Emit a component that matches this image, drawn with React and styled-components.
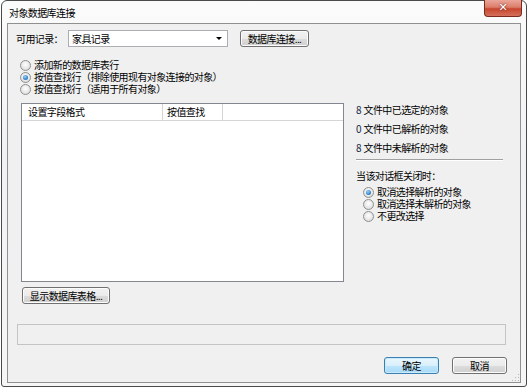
import React from "react";
import styled, { createGlobalStyle, css } from "styled-components";

const GlobalStyle = createGlobalStyle`
  body {
    margin: 0;
    background: #ffffff;
    font-family: "Noto Sans CJK SC", "Noto Sans", sans-serif;
    font-size: 10px;
    line-height: 12px;
    color: #000;
  }
`;

const Window = styled.div`
  width: 514px;
  height: 382px;
  margin-left: 1px;
  border: 1px solid #4a4a4a;
  border-radius: 6px 6px 3px 3px;
  background: linear-gradient(180deg, #fbfbfb 0%, #f1f2f4 40%, #f6f6f6 100%);
  display: flex;
  flex-direction: column;
  padding: 0 5px 3px 5px;
  box-sizing: content-box;
`;

const TitleBar = styled.div`
  height: 22px;
  flex-shrink: 0;
  display: flex;
  align-items: flex-start;
  justify-content: space-between;
`;

const TitleText = styled.div`
  margin-top: 6px;
  padding-left: 2px;
  letter-spacing: -0.6px;
`;

const CloseButton = styled.div`
  width: 36px;
  height: 16px;
  margin-top: -1px;
  margin-right: -1px;
  border: 1px solid #7a2a1e;
  border-top: none;
  border-radius: 0 0 4px 4px;
  background: linear-gradient(180deg, #eaa79a 0%, #dc7d6a 45%, #c8462f 55%, #d4705b 100%);
  display: flex;
  align-items: center;
  justify-content: center;
  color: #fff;
  font-family: "DejaVu Sans", sans-serif;
  font-weight: bold;
  font-size: 11px;
  text-shadow: 0 0 2px #5a1a10;
`;

const Client = styled.div`
  flex: 1;
  border: 1px solid #8f9090;
  background: #f0f0f0;
  display: flex;
  flex-direction: column;
  position: relative;
`;

const TopRow = styled.div`
  display: flex;
  align-items: center;
  margin: 6px 0 0 8px;
  height: 17px;
`;

const Label = styled.div`
  width: 52px;
  letter-spacing: -0.6px;
`;

const Select = styled.div`
  width: 150px;
  height: 15px;
  border: 1px solid #abadb3;
  background: #fff;
  display: flex;
  align-items: center;
  justify-content: space-between;
  padding: 0 5px 0 3px;
  box-sizing: content-box;
  letter-spacing: -0.6px;
`;

const Arrow = styled.span`
  width: 0;
  height: 0;
  border-left: 3px solid transparent;
  border-right: 3px solid transparent;
  border-top: 3px solid #000;
`;

const Button = styled.div`
  width: ${(p) => p.$w}px;
  height: 15px;
  border: 1px solid ${(p) => (p.$primary ? "#3c7fb1" : "#707070")};
  border-radius: 3px;
  box-shadow: inset 0 0 0 1px ${(p) => (p.$primary ? "#c7ebfc" : "#fcfcfc")};
  background: ${(p) =>
    p.$primary
      ? "linear-gradient(180deg, #eaf6fd 0%, #d9f0fc 50%, #bee6fd 51%, #a7d9f5 100%)"
      : "linear-gradient(180deg, #f2f2f2 0%, #ebebeb 50%, #dddddd 51%, #cfcfcf 100%)"};
  display: flex;
  align-items: center;
  justify-content: center;
  letter-spacing: -0.6px;
  box-sizing: content-box;
  ${(p) =>
    p.$ml &&
    css`
      margin-left: ${p.$ml}px;
    `}
`;

const RadioGroup = styled.div`
  display: flex;
  flex-direction: column;
  margin: ${(p) => p.$margin};
`;

const RadioRow = styled.div`
  display: flex;
  align-items: center;
  height: ${(p) => p.$h || 12}px;
  letter-spacing: -0.6px;
  white-space: nowrap;
`;

const RadioDot = styled.span`
  width: 9px;
  height: 9px;
  border: 1px solid #8e8f8f;
  border-radius: 50%;
  background: radial-gradient(circle at 50% 40%, #ffffff 0%, #e6e6e6 60%, #cfcfcf 100%);
  margin-right: 3px;
  display: flex;
  align-items: center;
  justify-content: center;
  flex-shrink: 0;
  &::after {
    content: "";
    width: 5px;
    height: 5px;
    border-radius: 50%;
    display: ${(p) => (p.$checked ? "block" : "none")};
    background: radial-gradient(circle at 40% 35%, #9fd2f6 0%, #3a8ad3 55%, #1d5b9d 100%);
  }
`;

const Main = styled.div`
  display: flex;
  margin: 8px 0 0 13px;
`;

const Table = styled.div`
  width: 321px;
  height: 177px;
  border: 1px solid #828790;
  background: #fff;
  display: flex;
  flex-direction: column;
`;

const TableHeader = styled.div`
  display: flex;
  height: 16px;
  border-bottom: 1px solid #d5d5d5;
`;

const HeaderCell = styled.div`
  width: ${(p) => p.$w}px;
  border-right: 1px solid #d5d5d5;
  padding-left: ${(p) => p.$pl}px;
  display: flex;
  align-items: center;
  letter-spacing: -0.6px;
  box-sizing: border-box;
`;

const Side = styled.div`
  margin-left: 12px;
  width: 147px;
  display: flex;
  flex-direction: column;
`;

const CountRow = styled.div`
  height: 19px;
  display: flex;
  align-items: center;
  letter-spacing: -0.6px;
  ${(p) =>
    p.$first &&
    css`
      margin-top: -3px;
    `}
`;

const Count = styled.span`
  color: #1a2a4a;
  margin-right: 2px;
  letter-spacing: 0;
`;

const Separator = styled.div`
  height: 1px;
  background: #a0a0a0;
  border-bottom: 1px solid #fff;
  margin: 2px 0 8px;
`;

const SideLabel = styled.div`
  height: 14px;
  display: flex;
  align-items: center;
  letter-spacing: -0.6px;
`;

const ShowButtonWrap = styled.div`
  margin: 5px 0 0 14px;
`;

const StatusBox = styled.div`
  margin: 20px 0 0 9px;
  width: 487px;
  height: 19px;
  border: 1px solid #c4c4c4;
  background: #f0f0f0;
`;

const Footer = styled.div`
  display: flex;
  justify-content: flex-end;
  margin: 12px 13px 0 0;
`;

const Grip = styled.div`
  position: absolute;
  right: 1px;
  bottom: 1px;
  width: 8px;
  height: 8px;
  background-image: radial-gradient(circle, #b5b5b5 0.8px, transparent 1px);
  background-size: 3px 3px;
  clip-path: polygon(100% 0, 100% 100%, 0 100%);
`;

export default function App() {
  return (
    <>
      <GlobalStyle />
      <Window>
        <TitleBar>
          <TitleText>对象数据库连接</TitleText>
          <CloseButton>✕</CloseButton>
        </TitleBar>
        <Client>
          <TopRow>
            <Label>可用记录：</Label>
            <Select>
              <span>家具记录</span>
              <Arrow />
            </Select>
            <Button $w={67} $ml={12}>数据库连接...</Button>
          </TopRow>

          <RadioGroup $margin="12px 0 0 12px">
            <RadioRow>
              <RadioDot />
              添加新的数据库表行
            </RadioRow>
            <RadioRow>
              <RadioDot $checked />
              按值查找行（排除使用现有对象连接的对象）
            </RadioRow>
            <RadioRow>
              <RadioDot />
              按值查找行（适用于所有对象）
            </RadioRow>
          </RadioGroup>

          <Main>
            <Table>
              <TableHeader>
                <HeaderCell $w={141} $pl={6}>设置字段格式</HeaderCell>
                <HeaderCell $w={60} $pl={4}>按值查找</HeaderCell>
              </TableHeader>
            </Table>
            <Side>
              <CountRow $first>
                <Count>8</Count>文件中已选定的对象
              </CountRow>
              <CountRow>
                <Count>0</Count>文件中已解析的对象
              </CountRow>
              <CountRow>
                <Count>8</Count>文件中未解析的对象
              </CountRow>
              <Separator />
              <SideLabel>当该对话框关闭时：</SideLabel>
              <RadioGroup $margin="3px 0 0 7px">
                <RadioRow>
                  <RadioDot $checked />
                  取消选择解析的对象
                </RadioRow>
                <RadioRow>
                  <RadioDot />
                  取消选择未解析的对象
                </RadioRow>
                <RadioRow>
                  <RadioDot />
                  不更改选择
                </RadioRow>
              </RadioGroup>
            </Side>
          </Main>

          <ShowButtonWrap>
            <Button $w={86}>显示数据库表格...</Button>
          </ShowButtonWrap>

          <StatusBox />

          <Footer>
            <Button $w={53} $primary>确定</Button>
            <Button $w={53} $ml={13}>取消</Button>
          </Footer>
          <Grip />
        </Client>
      </Window>
    </>
  );
}
